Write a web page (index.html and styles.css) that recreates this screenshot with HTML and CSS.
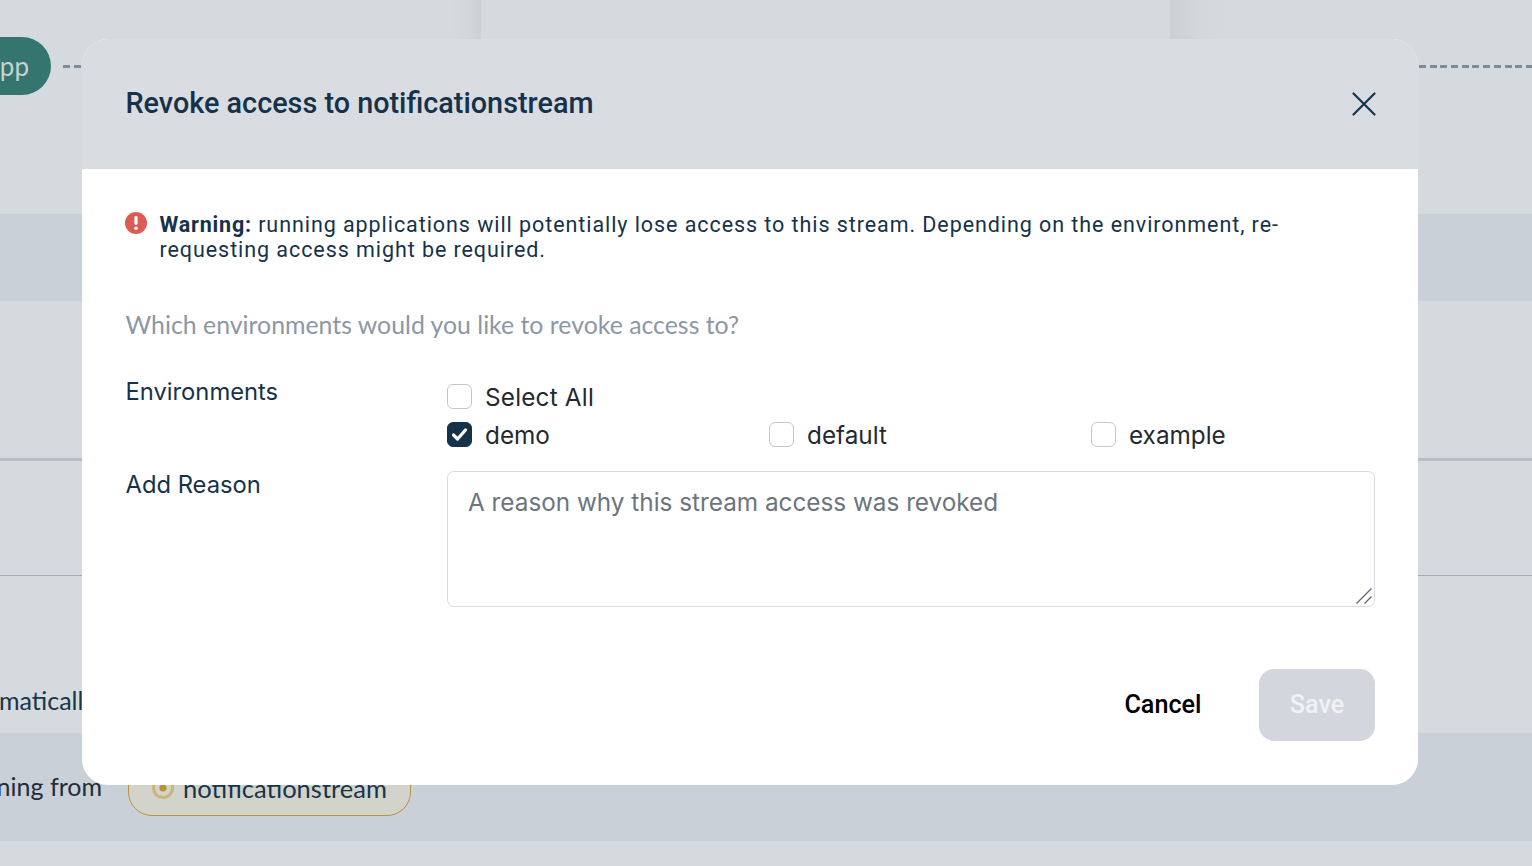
FILE: index.html
```html
<!DOCTYPE html>
<html lang="en">
<head>
<meta charset="utf-8">
<title>Revoke access</title>
<link rel="stylesheet" href="styles.css">
</head>
<body>
<div class="backdrop">
  <div class="band band-top">
    <div class="col col-left"></div>
    <div class="col col-mid"></div>
    <div class="col col-right"></div>
  </div>
  <div class="band band-dark band-a"></div>
  <div class="band band-b"></div>
  <div class="band band-c"></div>
  <div class="band band-d"><span class="clip-text clip-auto">maticall</span></div>
  <div class="band band-dark band-e"><span class="clip-text clip-from">Listening from</span></div>
  <div class="band band-f"></div>

  <div class="app-node"><span>pp</span></div>
  <div class="dash dash-left"></div>
  <div class="dash dash-right"></div>
  <div class="stream-chip">
    <svg class="stream-icon" viewBox="0 0 24 24" aria-hidden="true">
      <circle cx="12" cy="12" r="9.5" fill="none" stroke="#cdb57b" stroke-width="3"></circle>
      <circle cx="12" cy="12" r="3.6" fill="#bb9437"></circle>
    </svg>
    <span>notificationstream</span>
  </div>
</div>

<div class="modal">
  <header class="modal-head">
    <h1 class="modal-title">Revoke access to notificationstream</h1>
    <button class="close" type="button" aria-label="Close">
      <svg viewBox="0 0 24 24" width="24" height="24" aria-hidden="true">
        <path d="M1.5 1.5 22.5 22.5M22.5 1.5 1.5 22.5" fill="none" stroke="#16324a" stroke-width="2.2" stroke-linecap="round"></path>
      </svg>
    </button>
  </header>
  <div class="modal-body">
    <div class="warning">
      <svg class="warning-icon" viewBox="0 0 22 22" aria-hidden="true">
        <circle cx="11" cy="11" r="11" fill="#de5a55"></circle>
        <rect x="9.4" y="4" width="3.2" height="9" rx="1.4" fill="#fff"></rect>
        <circle cx="11" cy="16.3" r="1.8" fill="#fff"></circle>
      </svg>
      <p class="warning-text"><strong>Warning:</strong> running applications will potentially lose access to this stream. Depending on the environment, re-requesting access might be required.</p>
    </div>
    <p class="question">Which environments would you like to revoke access to?</p>
    <div class="form">
      <div class="label label-env">Environments</div>
      <div class="envs">
        <label class="check check-all"><span class="box"><input type="checkbox"></span><span>Select All</span></label>
        <label class="check"><span class="box"><input type="checkbox" checked><svg class="tick" viewBox="0 0 25 25" aria-hidden="true"><path d="M6.5 13l4 4 8-9" fill="none" stroke="#fff" stroke-width="3.2" stroke-linecap="round" stroke-linejoin="round"></path></svg></span><span>demo</span></label>
        <label class="check"><span class="box"><input type="checkbox"></span><span>default</span></label>
        <label class="check"><span class="box"><input type="checkbox"></span><span>example</span></label>
      </div>
      <div class="label label-reason">Add Reason</div>
      <div class="reason-wrap">
        <textarea class="reason" placeholder="A reason why this stream access was revoked"></textarea>
        <svg class="grip" viewBox="0 0 16 16" aria-hidden="true"><path d="M0.5 15.5 15.5 0.5M8.5 15.5 15.5 8.5" fill="none" stroke="#666" stroke-width="1.3"></path></svg>
      </div>
    </div>
    <footer class="actions">
      <button class="btn btn-cancel" type="button">Cancel</button>
      <button class="btn btn-save" type="button">Save</button>
    </footer>
  </div>
</div>
</body>
</html>
```
FILE: styles.css
```css
* { box-sizing: border-box; }
html, body { margin: 0; height: 100%; }
body { width: 1532px; height: 866px; overflow: hidden; position: relative; background: #d5dade; font-family: "Roboto", sans-serif; }

.backdrop { width: 100%; height: 100%; display: flex; flex-direction: column; position: relative; overflow: hidden; }
.band { background: #d5dade; position: relative; flex: none; }
.band-dark { background: #c9d0d8; }
.band-top { height: 214px; display: flex; }
.band-a { height: 87px; }
.band-b { height: 160px; border-bottom: 3px solid #b7bdc4; }
.band-c { height: 115px; border-bottom: 1px solid #a3abb2; }
.band-d { height: 157px; }
.band-e { height: 108px; }
.band-f { height: 25px; }

.col-left { width: 481px; background: linear-gradient(90deg, #d5dade 0, #d5dade 450px, #d2d7db 468px, #cbd0d4 481px); }
.col-mid { width: 689px; background: #d5dade; }
.col-right { flex: 1; background: linear-gradient(90deg, #cbd0d4 0, #d2d7db 25px, #d5dade 55px); }

.clip-text { position: absolute; white-space: nowrap; font-family: "Lato", sans-serif; font-size: 25px; line-height: 30px; }
.clip-auto { top: 109px; left: -1px; color: #17354d; }
.clip-from { top: 38px; right: 1430px; color: #1f2d3a; }

.app-node { position: absolute; left: -60px; top: 37px; width: 111px; height: 58px; border-radius: 29px; background: #35756f; color: #c5d3d3; font-family: "Lato", sans-serif; font-size: 26px; line-height: 58px; text-align: right; padding-right: 22px; }
.dash { position: absolute; top: 65px; height: 3px; background: repeating-linear-gradient(90deg, #7f8b98 0 7px, transparent 7px 10.7px); }
.dash-left { left: 63px; width: 24px; }
.dash-right { left: 1419px; width: 113px; }
.stream-chip { position: absolute; left: 128px; top: 760px; width: 283px; height: 56px; border: 1px solid #b8923e; border-radius: 24px; background: #d2d4cc; display: flex; align-items: center; gap: 8px; padding-left: 22px; font-family: "Lato", sans-serif; font-size: 25.5px; color: #17354d; }
.stream-icon { width: 24px; height: 24px; flex: none; }

.modal { position: absolute; left: 82px; top: 39px; width: 1336px; height: 746px; border-radius: 26px; overflow: hidden; background: #fff; display: flex; flex-direction: column; }
.modal-head { height: 130px; flex: none; background: #d9dde2; display: flex; align-items: center; justify-content: space-between; padding: 0 42px 1px 43.5px; }
.modal-title { margin: 0; padding-bottom: 2px; font-family: "Roboto", sans-serif; font-weight: 500; font-size: 28.8px; line-height: 32px; color: #16324a; }
.close { border: 0; padding: 0; background: none; width: 24px; height: 24px; display: block; }
.close svg { display: block; }

.modal-body { flex: 1; display: flex; flex-direction: column; padding: 43px 43px 44px 43.5px; }
.warning { display: flex; gap: 12.5px; align-items: flex-start; }
.warning-icon { width: 22px; height: 22px; flex: none; margin-left: -0.5px; }
.warning-text { margin: 0; font-family: "Roboto", sans-serif; font-size: 21.5px; line-height: 25px; letter-spacing: 0.93px; color: #16324a; width: 1150px; }
.warning-text strong { font-weight: 700; letter-spacing: 0.8px; }
.question { margin: 47px 0 0; font-family: "Lato", sans-serif; font-size: 24.85px; line-height: 30px; color: #8c97a6; }

.form { margin-top: 38px; display: grid; grid-template-columns: 321.5px 928px; grid-template-rows: 94px 136px; }
.label { font-family: "Inter", sans-serif; font-size: 23.75px; line-height: 30px; color: #16324a; }
.label-reason { margin-top: -1px; }
.envs { display: grid; grid-template-columns: repeat(3, 322px); grid-auto-rows: 38px; padding-top: 1px; }
.check { display: flex; align-items: center; gap: 13px; font-family: "Inter", sans-serif; font-size: 24.3px; color: #24292f; line-height: 30px; }
.check-all { grid-column: 1 / -1; letter-spacing: 0.2px; }
.box { position: relative; width: 25px; height: 25px; flex: none; display: block; margin-top: -2px; }
.box input { appearance: none; -webkit-appearance: none; display: block; margin: 0; width: 25px; height: 25px; border: 1px solid #c4c6ca; border-radius: 6px; background: #fff; }
.box input:checked { border-color: #16324a; background: #16324a; }
.tick { position: absolute; left: 0; top: 0; width: 25px; height: 25px; }
.reason-wrap { position: relative; width: 928px; height: 136px; }
.reason { display: block; width: 928px; height: 136px; border: 1px solid #d9d9ea; border-radius: 7px; padding: 15px 20px; font-family: "Inter", sans-serif; font-size: 24.3px; line-height: 30px; color: #24292f; background: #fff; outline: 0; margin: 0; resize: none; }
.reason::placeholder { color: #6c757d; opacity: 1; }
.grip { position: absolute; right: 3px; bottom: 3px; width: 16px; height: 16px; }

.actions { margin-top: auto; display: flex; justify-content: flex-end; align-items: center; gap: 57.5px; }
.btn { border: 0; font-family: "Roboto", sans-serif; font-weight: 500; font-size: 25.2px; padding: 0 0 2px; }
.btn-cancel { background: none; color: #000; }
.btn-save { width: 116px; height: 72px; border-radius: 15px; background: #d3d6dd; color: #f1f2f5; }
```
